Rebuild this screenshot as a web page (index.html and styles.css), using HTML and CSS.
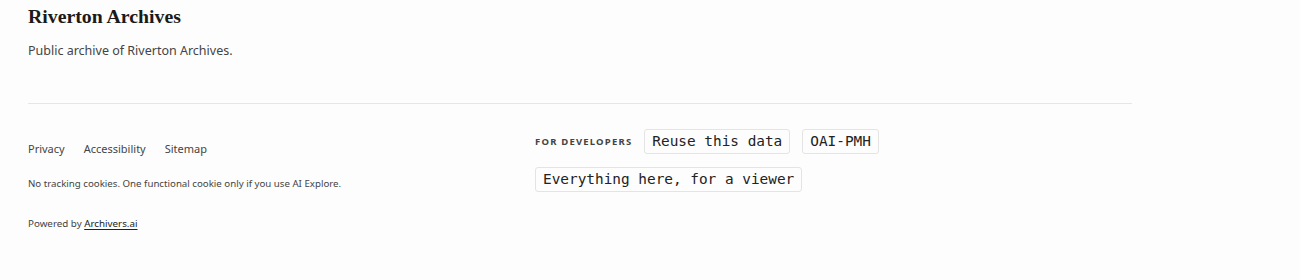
FILE: index.html
```html
<!DOCTYPE html>
<html lang="en">
<head>
<meta charset="utf-8">
<title>Riverton Archives</title>
<link rel="stylesheet" href="styles.css">
</head>
<body>
<footer class="site-footer">
  <div class="brand">
    <h2 class="brand-title">Riverton Archives</h2>
    <p class="brand-desc">Public archive of Riverton Archives.</p>
  </div>
  <hr class="divider">
  <div class="footer-row">
    <div class="footer-left">
      <nav class="links">
        <a href="#">Privacy</a>
        <a href="#">Accessibility</a>
        <a href="#">Sitemap</a>
      </nav>
      <p class="cookies">No tracking cookies. One functional cookie only if you use AI Explore.</p>
      <p class="powered">Powered by <a href="#">Archivers.ai</a></p>
    </div>
    <div class="footer-dev">
      <span class="dev-label">For developers</span>
      <a class="chip" href="#">Reuse this data</a>
      <a class="chip" href="#">OAI-PMH</a>
      <a class="chip" href="#">Everything here, for a viewer</a>
    </div>
  </div>
</footer>
</body>
</html>
```
FILE: styles.css
```css
html, body {
  margin: 0;
  padding: 0;
  background: #fdfdfd;
}
body {
  font-family: "Source Sans Pro", "Noto Sans", "Open Sans", sans-serif;
  color: #444;
}
.site-footer {
  width: 1104px;
  margin-left: 28px;
  padding-top: 4px;
}
.brand-title {
  margin: 0;
  font-family: "Liberation Serif", "DejaVu Serif", serif;
  font-weight: bold;
  font-size: 19.8px;
  line-height: 24px;
  color: #1a1a1a;
}
.brand-desc {
  margin: 14px 0 0;
  font-size: 12.5px;
  line-height: 18px;
  color: #444;
}
.divider {
  margin: 43px 0 0;
  border: 0;
  border-top: 1px solid #e6e6e6;
  height: 0;
}
.footer-row {
  display: flex;
  align-items: flex-start;
  margin-top: 25px;
}
.footer-left {
  width: 507px;
  padding-top: 12px;
}
.links {
  display: flex;
  gap: 19px;
  font-size: 11px;
  line-height: 16px;
}
.links a {
  color: #444;
  text-decoration: none;
}
.cookies {
  margin: 20px 0 0;
  font-size: 9.7px;
  line-height: 14px;
  color: #444;
}
.powered {
  margin: 26px 0 0;
  font-size: 9.8px;
  line-height: 14px;
  color: #444;
}
.powered a {
  color: #222;
  text-decoration: underline;
  text-underline-offset: 2px;
}
.footer-dev {
  display: flex;
  flex-wrap: wrap;
  align-items: center;
  align-content: flex-start;
  column-gap: 12px;
  row-gap: 13px;
  width: 360px;
}
.dev-label {
  font-size: 9.5px;
  font-weight: bold;
  letter-spacing: 1.2px;
  text-transform: uppercase;
  color: #444;
}
.chip {
  display: inline-block;
  font-family: "DejaVu Sans Mono", "Liberation Mono", monospace;
  font-size: 14.4px;
  line-height: 17px;
  padding: 3px 7px;
  border: 1px solid #e4e4e4;
  border-radius: 3px;
  background: #fdfdfd;
  color: #222;
  text-decoration: none;
}
```
